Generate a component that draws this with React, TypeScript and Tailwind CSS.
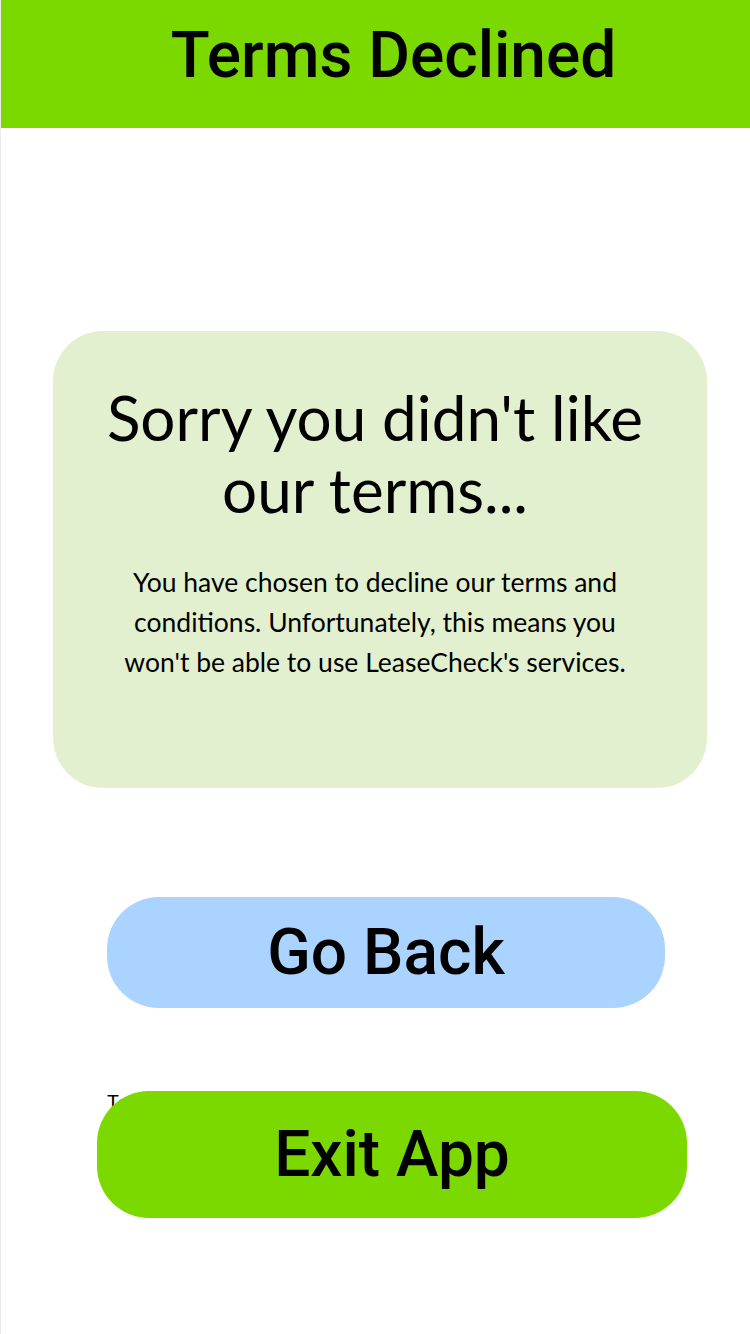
export default function App() {
  return (
    <div className="min-h-[1334px] w-[750px] border-l border-[#ececec] bg-white">
      <header className="flex h-[128px] items-center justify-center bg-[#7cd900] pb-[16px] pl-[36px]">
        <h1 className="text-[64px] font-medium leading-none text-black" style={{ fontFamily: "Roboto, sans-serif" }}>
          Terms Declined
        </h1>
      </header>

      <main className="flex flex-col" style={{ fontFamily: "Lato, 'Open Sans', sans-serif" }}>
        <section className="mr-[43px] ml-[52px] mt-[203px] h-[457px] rounded-[50px] bg-[#e2f0cf] pt-[50px] pr-[10px] text-center text-black">
          <h2 className="text-[62px] leading-[72px] font-normal">
            Sorry you didn't like
            <br />
            our terms...
          </h2>
          <p className="mt-[37px] text-[26.5px] leading-[40px]">
            You have chosen to decline our terms and
            <br />
            conditions. Unfortunately, this means you
            <br />
            won't be able to use LeaseCheck's services.
          </p>
        </section>

        <button
          className="mt-[109px] ml-[106px] flex h-[111px] w-[558px] items-center justify-center rounded-[52px] bg-[#aad3ff] text-[64px] font-medium text-black"
          style={{ fontFamily: "Roboto, sans-serif" }}
        >
          Go Back
        </button>

        <div className="relative mt-[83px] ml-[96px]">
          <p className="ml-[10px] text-[20px] leading-[24px] text-black" style={{ fontFamily: "Roboto, sans-serif" }}>
            Tap below to leave
          </p>
          <button
            className="absolute top-0 left-0 flex h-[127px] w-[590px] items-center justify-center rounded-[52px] bg-[#7cd900] text-[64px] font-medium text-black"
            style={{ fontFamily: "Roboto, sans-serif" }}
          >
            Exit App
          </button>
        </div>
      </main>
    </div>
  );
}
